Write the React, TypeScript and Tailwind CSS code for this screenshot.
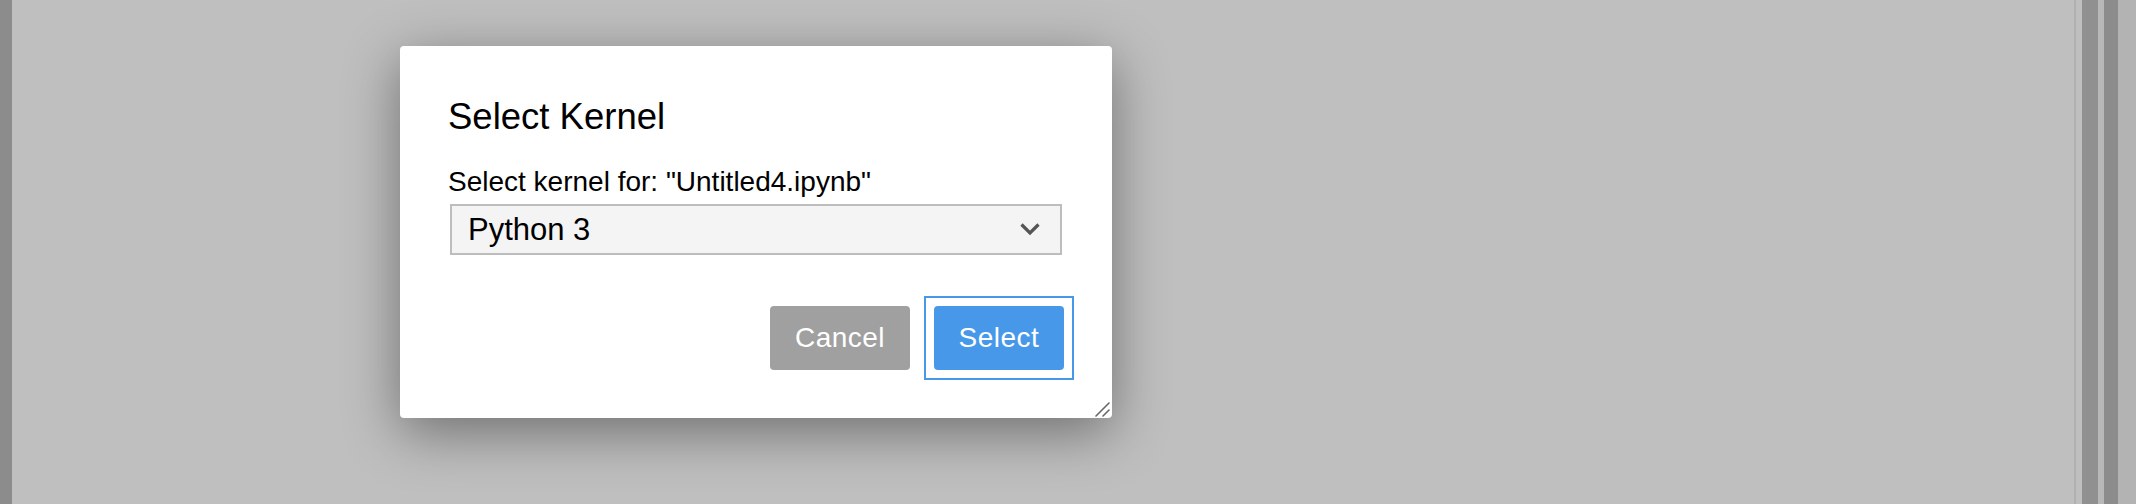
const FONT = "font-['Liberation_Sans',Arial,Helvetica,sans-serif]";

export default function App() {
  return (
    <div className={`flex h-[504px] w-[2136px] overflow-hidden bg-[#bfbfbf] ${FONT}`}>
      {/* left gutter */}
      <div className="w-[12px] shrink-0 bg-[#8c8c8c]" />

      {/* main area with the modal */}
      <div className="flex-1 pl-[388px] pt-[46px]">
        <div className="relative w-[712px] rounded-[4px] bg-white pb-[38px] pl-[48px] pr-[38px] pt-[53px] shadow-[0_14px_55px_rgba(0,0,0,0.42)]">
          <h2 className="text-[36.5px] leading-[36px] text-black">Select Kernel</h2>

          <label className="mt-[33px] block text-[28px] leading-none text-black">
            Select kernel for: "Untitled4.ipynb"
          </label>

          <div className="ml-[2px] mr-[12px] mt-[8px] flex h-[51px] items-center justify-between border-2 border-[#bdbdbd] bg-[#f4f4f4] pl-[16px] pr-[20px]">
            <span className="text-[31px] leading-none text-black">Python 3</span>
            <svg width="20" height="13" viewBox="0 0 20 13" fill="none" stroke="#555" strokeWidth="3.2">
              <polyline points="1.5,1.5 10,10 18.5,1.5" />
            </svg>
          </div>

          <div className="mt-[41px] flex items-center justify-end gap-[14px]">
            <button className="h-[64px] w-[140px] rounded-[4px] bg-[#a0a0a0] text-[28px] leading-none tracking-[0.5px] text-white">
              Cancel
            </button>
            <div className="border-2 border-[#4898e9] p-[8px]">
              <button className="block h-[64px] w-[130px] rounded-[4px] bg-[#4898e9] text-[28px] leading-none tracking-[0.5px] text-white">
                Select
              </button>
            </div>
          </div>

          {/* resize grip */}
          <svg className="absolute bottom-[1px] right-[2px] h-[16px] w-[16px]" viewBox="0 0 16 16" fill="none" stroke="#666" strokeWidth="1.6" strokeLinecap="round">
            <line x1="2" y1="15" x2="15" y2="2" />
            <line x1="9" y1="15" x2="15" y2="9" />
          </svg>
        </div>
      </div>

      {/* right scroll gutters */}
      <div className="flex shrink-0">
        <div className="w-[2px] bg-[#b0b0b0]" />
        <div className="w-[6px] bg-[#bfbfbf]" />
        <div className="w-[16px] bg-[#909090]" />
        <div className="w-[6px] bg-[#b8b8b8]" />
        <div className="w-[14px] bg-[#8c8c8c]" />
        <div className="w-[18px] bg-[#b3b3b3]" />
      </div>
    </div>
  );
}
